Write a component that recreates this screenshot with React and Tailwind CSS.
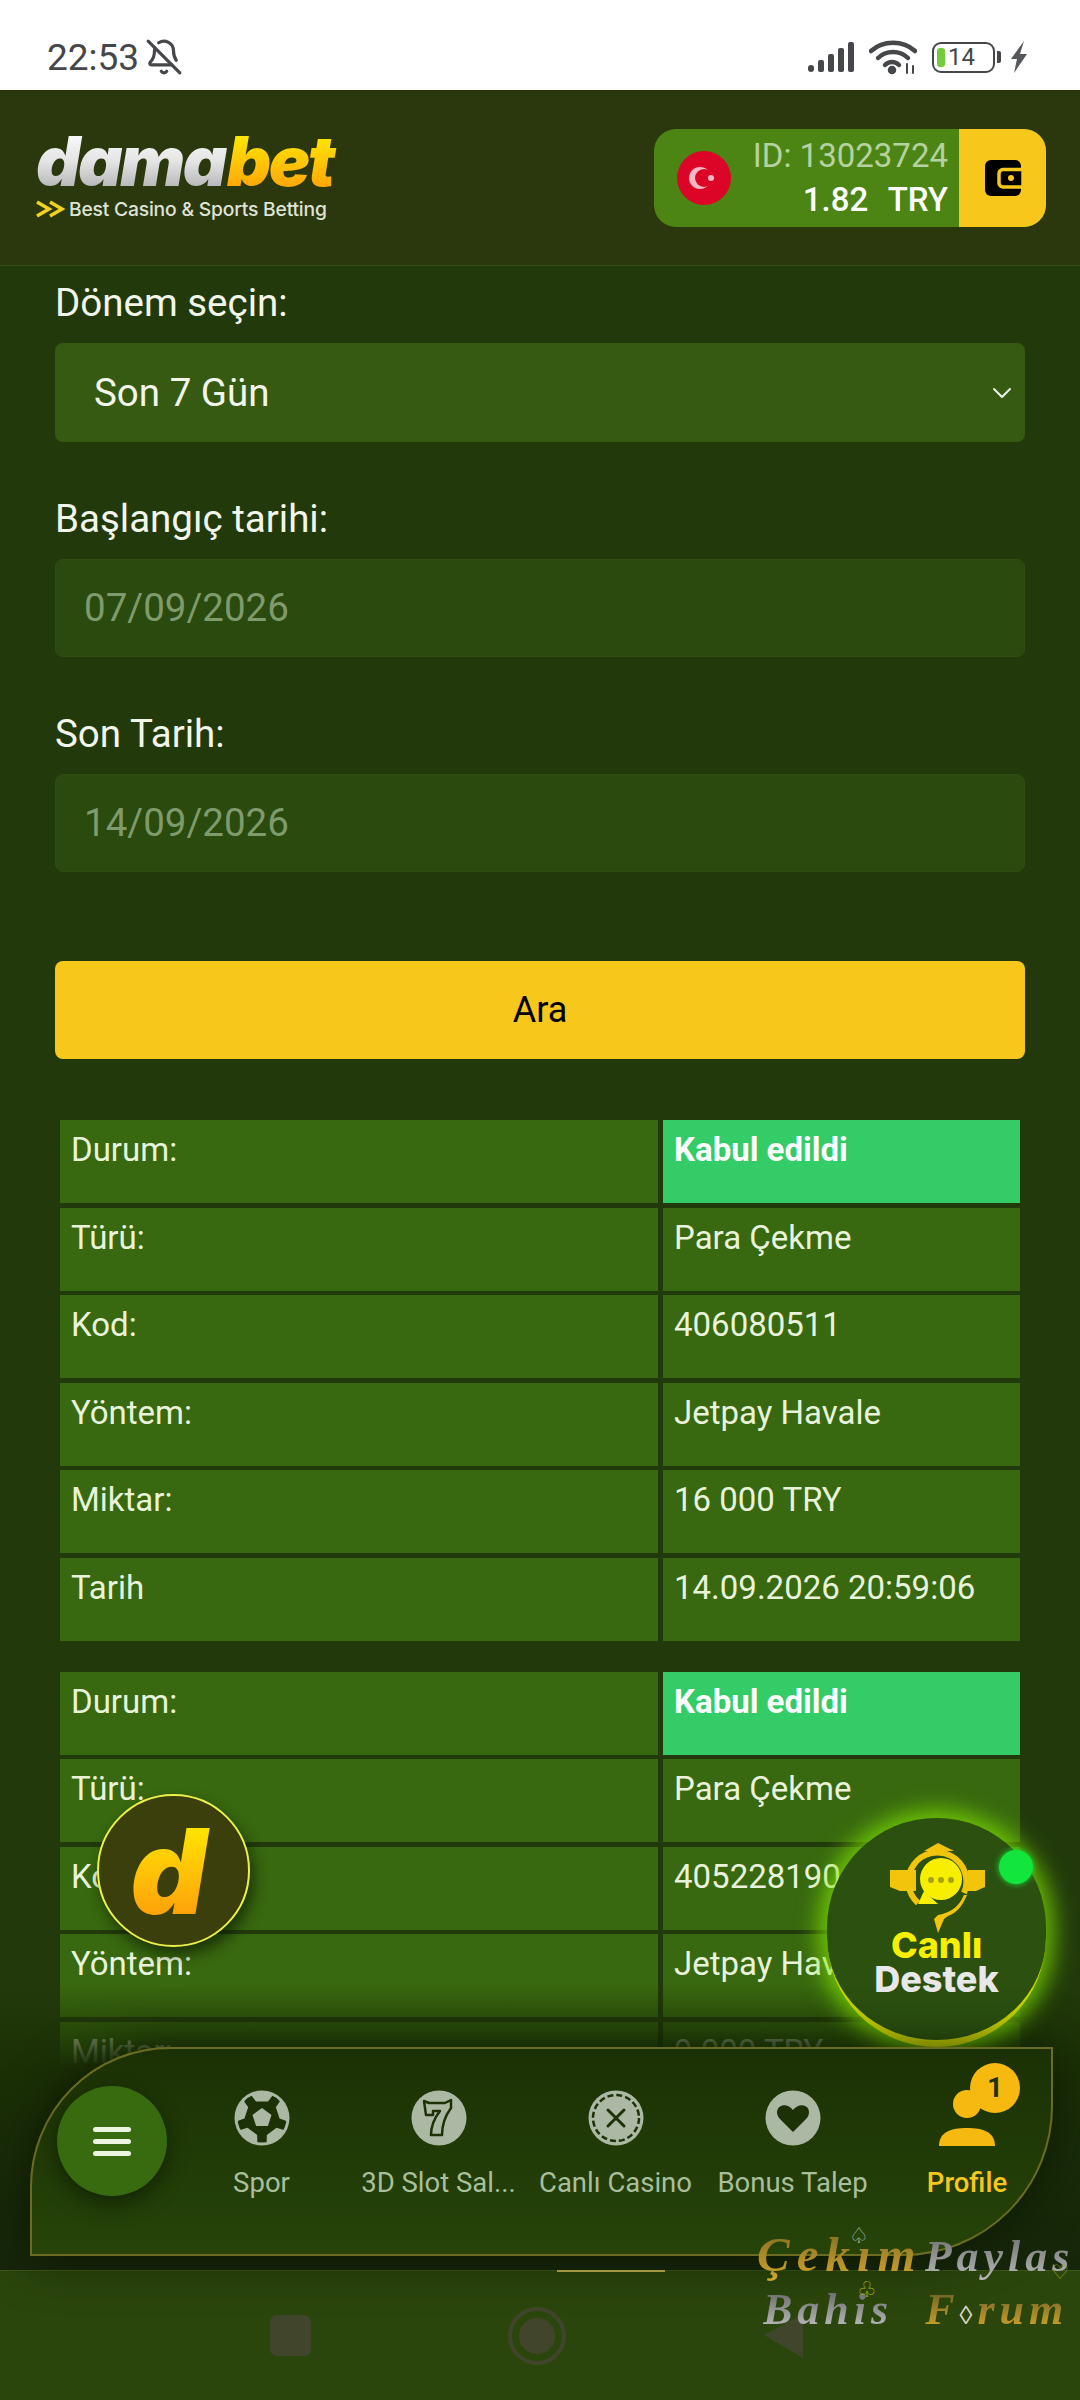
import { BellOff, ChevronDown } from 'lucide-react'

const rowsFirst = [
  ['Durum:', 'Kabul edildi'],
  ['Türü:', 'Para Çekme'],
  ['Kod:', '406080511'],
  ['Yöntem:', 'Jetpay Havale'],
  ['Miktar:', '16 000 TRY'],
  ['Tarih', '14.09.2026 20:59:06'],
]

const rowsSecond = [
  ['Durum:', 'Kabul edildi'],
  ['Türü:', 'Para Çekme'],
  ['Kod:', '405228190'],
  ['Yöntem:', 'Jetpay Havale'],
  ['Miktar:', '9 000 TRY'],
]

function StatusBar() {
  return (
    <div className="flex h-[90px] shrink-0 items-center justify-between bg-white pl-[47px] pr-[52px] pt-[24px] text-[#45474b]">
      <div className="flex items-center gap-[6px]">
        <span className="text-[37px] leading-none">22:53</span>
        <BellOff size={38} strokeWidth={2} />
      </div>
      <div className="flex items-center gap-[13px]">
        <svg width="48" height="32" viewBox="0 0 48 32" fill="#45474b">
          <rect x="0" y="24" width="6" height="7" rx="3" />
          <rect x="10" y="19" width="6" height="12" rx="2" />
          <rect x="20" y="13" width="6" height="18" rx="2" />
          <rect x="30" y="7" width="6" height="24" rx="2" />
          <rect x="40" y="1" width="6" height="30" rx="2" />
        </svg>
        <svg width="48" height="36" viewBox="0 0 48 36" fill="none" stroke="#45474b" strokeWidth="4.5" strokeLinecap="round">
          <path d="M2 12C14 1 34 1 46 12" />
          <path d="M9 19C17 11 31 11 39 19" />
          <path d="M16 26C20 22 26 22 30 26" />
          <circle cx="23" cy="31" r="2" fill="#45474b" />
          <path d="M38 25v9M44 27v7" strokeWidth="2" />
        </svg>
        <div className="ml-[2px] flex items-center gap-[2px]">
          <div className="flex h-[31px] w-[63px] items-center gap-[3px] rounded-[9px] border-[2.5px] border-[#45474b] pl-[3px]">
            <div className="h-[19px] w-[8px] rounded-[3px] bg-[#74cc3c]" />
            <span className="text-[24px] leading-none">14</span>
          </div>
          <div className="h-[12px] w-[4px] rounded-r-[2px] bg-[#45474b]" />
        </div>
        <svg className="-ml-[4px]" width="18" height="32" viewBox="0 0 18 32" fill="#55575a">
          <path d="M14 0L1 18h6l-3 14 13-19h-7z" />
        </svg>
      </div>
    </div>
  )
}

function Logo() {
  return (
    <div className="-mt-[3px] flex flex-col">
      <div className="flex h-[58px] items-center text-[69px] font-black italic leading-none tracking-[-2.5px] [font-family:Inter,sans-serif]">
        <span className="bg-gradient-to-b from-[#ffffff] via-[#e4e4e4] to-[#a9a9a9] bg-clip-text pr-[2px] text-transparent">dama</span>
        <span className="bg-gradient-to-b from-[#fff000] to-[#ff9c0a] bg-clip-text pr-[4px] text-transparent">bet</span>
      </div>
      <div className="mt-[9px] flex items-center gap-[3px]">
        <svg width="30" height="18" viewBox="0 0 30 18" fill="none" stroke="#f2d21c" strokeWidth="3.5">
          <path d="M1 2l12 7-12 7M14 2l12 7-12 7" />
        </svg>
        <span className="text-[19.3px] font-medium leading-none tracking-[-0.2px] text-[#dfe3d6] [font-family:Inter,sans-serif]">Best Casino &amp; Sports Betting</span>
      </div>
    </div>
  )
}

function Balance() {
  return (
    <div className="flex h-[98px] w-[392px] overflow-hidden rounded-[22px] bg-[#4d8514]">
      <div className="flex flex-1 items-center justify-between pl-[22px] pr-[11px]">
        <svg width="56" height="56" viewBox="0 0 56 56">
          <circle cx="28" cy="28" r="27" fill="#dc0528" />
          <circle cx="24" cy="28" r="11" fill="#f7b8c4" />
          <circle cx="28" cy="28" r="9" fill="#dc0528" />
          <circle cx="35" cy="28" r="3" fill="#f7b8c4" />
        </svg>
        <div className="flex flex-col items-end text-[33px] leading-[44px]">
          <span className="text-[#b5d2a0]">ID: 13023724</span>
          <span className="font-medium text-white [word-spacing:12px]">1.82 TRY</span>
        </div>
      </div>
      <div className="flex w-[87px] items-center justify-center bg-[#f7c71c]">
        <svg className="ml-[4px]" width="40" height="36" viewBox="0 0 40 36">
          <rect x="0" y="0" width="36" height="36" rx="6" fill="#000" />
          <path d="M38 9.500H18a4 4 0 0 0-4 4v9.500a4 4 0 0 0 4 4h20z" fill="#000" stroke="#f7c71c" strokeWidth="3.5" />
          <circle cx="26" cy="18" r="3" fill="#f7c71c" />
        </svg>
      </div>
    </div>
  )
}

function Header() {
  return (
    <div className="flex h-[176px] shrink-0 items-center justify-between border-b border-[#33500f] bg-[#2b380d] pl-[36px] pr-[34px]">
      <Logo />
      <Balance />
    </div>
  )
}

function Field({ label, children }) {
  return (
    <div className="mb-[56px]">
      <div className="mb-[19px] text-[38.5px] leading-[42px] text-[#f2f6ea]">{label}</div>
      {children}
    </div>
  )
}

function DateInput({ value }) {
  return (
    <div className="flex h-[98px] items-center rounded-[8px] border border-[#2e4f10] bg-[#2a4a0e] pl-[28px] text-[38.5px] text-[#7f9a6c]">
      {value}
    </div>
  )
}

function ResultTable({ rows }) {
  return (
    <div className="mx-[5px] grid grid-cols-[598px_357px] gap-x-[5px] gap-y-[4.5px] text-[33px] leading-[40px] text-[#e8f3da]">
      {rows.map(([label, value], index) => (
        <div key={label} className="contents">
          <div className="h-[83px] bg-[#38680f] pl-[11px] pt-[10px]">{label}</div>
          <div className={index === 0 ? 'h-[83px] bg-[#33cc66] pl-[11px] pt-[10px] font-bold text-white' : 'h-[83px] bg-[#38680f] pl-[11px] pt-[10px]'}>
            {value}
          </div>
        </div>
      ))}
    </div>
  )
}

function SoccerIcon() {
  return (
    <svg width="56" height="56" viewBox="0 0 56 56">
      <circle cx="28" cy="28" r="27.500" fill="#aab8a4" />
      <circle cx="28" cy="28" r="24.500" fill="#1c3206" />
      <path d="M28 18l9.500 6.900-3.600 11.100H22.100l-3.600-11.100z" fill="#aab8a4" />
      {[36, 108, 180, 252, 324].map((angle) => (
        <path key={angle} d="M17 51L22 44.500H34L39 51A25 25 0 0 1 17 51Z" fill="#aab8a4" transform={`rotate(${angle} 28 28)`} />
      ))}
    </svg>
  )
}

function SevenIcon() {
  return (
    <svg width="56" height="56" viewBox="0 0 56 56">
      <circle cx="28" cy="28" r="27.500" fill="#aab8a4" />
      <path d="M13 11L18 13H34L40 10V18C34 26 31 34 31 45H20C20 34 25 26 29 21H22V25H15Z" fill="#aab8a4" stroke="#1c3206" strokeWidth="2.500" strokeLinejoin="round" />
    </svg>
  )
}

function RouletteIcon() {
  return (
    <svg width="56" height="56" viewBox="0 0 56 56">
      <circle cx="28" cy="28" r="27.500" fill="#aab8a4" />
      <circle cx="28" cy="28" r="23" fill="none" stroke="#1c3206" strokeWidth="2.500" strokeDasharray="6 3" />
      <path d="M20 20l16 16M36 20L20 36" stroke="#1c3206" strokeWidth="3" strokeLinecap="round" />
    </svg>
  )
}

function HeartIcon() {
  return (
    <svg width="56" height="56" viewBox="0 0 56 56">
      <circle cx="28" cy="28" r="27.500" fill="#aab8a4" />
      <path d="M28 42L15 29c-4-4-4-10 0-12.500 4-2.500 9.500-1 13 3.500 3.500-4.500 9-6 13-3.500 4 2.500 4 8.500 0 12.500z" fill="#1c3206" />
    </svg>
  )
}

function BottomNav() {
  const items = [
    ['Spor', <SoccerIcon key="a" />],
    ['3D Slot Sal...', <SevenIcon key="b" />],
    ['Canlı Casino', <RouletteIcon key="c" />],
    ['Bonus Talep', <HeartIcon key="d" />],
  ]
  return (
    <div className="absolute left-[30px] top-[2047px] flex h-[209px] w-[1023px] rounded-tl-[140px] rounded-br-[150px] border-2 border-[#6b6c22] bg-gradient-to-b from-[#1b3105] to-[#264409] pl-[25px] shadow-[0_0_50px_rgba(10,20,0,0.8)]">
      <div className="mt-[37px] flex h-[110px] w-[110px] shrink-0 flex-col items-center justify-center gap-[7px] rounded-full bg-[#386a10] shadow-[0_8px_20px_rgba(10,20,0,0.6)]">
        <div className="h-[5px] w-[38px] rounded-full bg-[#edf4e2]" />
        <div className="h-[5px] w-[38px] rounded-full bg-[#edf4e2]" />
        <div className="h-[5px] w-[38px] rounded-full bg-[#edf4e2]" />
      </div>
      <div className="ml-[6px] flex">
        {items.map(([label, icon]) => (
          <div key={label} className="flex w-[177px] flex-col items-center pt-[41px] text-[27.5px] leading-[32px] text-[#a9bf9c]">
            {icon}
            <span className="mt-[21px] whitespace-nowrap">{label}</span>
          </div>
        ))}
        <div className="relative flex w-[172px] flex-col items-center pt-[41px] text-[27.5px] font-medium leading-[32px] text-[#f7c71c]">
          <svg width="56" height="56" viewBox="0 0 56 56" fill="#f5b90f">
            <circle cx="28" cy="14" r="14" />
            <path d="M0 56c0-14 12-18 28-18s28 4 28 18z" />
          </svg>
          <span className="mt-[21px]">Profile</span>
          <div className="absolute left-[89px] top-[14px] flex h-[50px] w-[50px] items-center justify-center rounded-full bg-[#f5b90f] text-[27px] font-bold text-[#1c3206]">1</div>
        </div>
      </div>
    </div>
  )
}

function FloatingLogo() {
  return (
    <div className="absolute left-[97px] top-[1794px] flex h-[153px] w-[153px] items-center justify-center rounded-full border-2 border-[#eef04a] bg-[#3a3f0c] shadow-[4px_8px_14px_rgba(10,20,0,0.6)]">
      <span className="bg-gradient-to-b from-[#ffe900] to-[#ff9c0a] bg-clip-text pr-[10px] text-[118px] font-black italic leading-[100px] text-transparent [font-family:Inter,sans-serif]">d</span>
    </div>
  )
}

function LiveSupport() {
  return (
    <div className="absolute left-[827px] top-[1818px] flex h-[229px] w-[219px] flex-col items-center rounded-full border-b-[7px] border-[#c8d400] bg-[#2b5010] pt-[25px] shadow-[0_0_22px_8px_rgba(130,230,0,0.75)]">
      <svg width="98" height="90" viewBox="0 0 98 90">
        <path d="M30 60A29 29 0 1 1 76 50" fill="none" stroke="#f2c40c" strokeWidth="6" />
        <path d="M36 8L50 0L66 8Z" fill="#f2c40c" />
        <path d="M2 27H28V48H12L2 44Z" fill="#f2c40c" />
        <path d="M80 27H97V44L88 48H78Z" fill="#f2c40c" />
        <path d="M76 52C70 66 60 70 50 72L46 76L50 90L56 76L60 73C68 70 74 64 79 52Z" fill="#f2c40c" />
        <circle cx="53" cy="36" r="21" fill="#f7ee00" />
        <path d="M36 48L30 61H50Z" fill="#f7ee00" />
        <circle cx="43" cy="37" r="3" fill="#a7a40a" />
        <circle cx="53" cy="37" r="3" fill="#a7a40a" />
        <circle cx="63" cy="37" r="3" fill="#a7a40a" />
      </svg>
      <span className="-mt-[5px] text-[36px] font-extrabold leading-[34px] text-[#f7ee00] [font-family:Inter,sans-serif]">Canlı</span>
      <span className="text-[36px] font-extrabold leading-[34px] text-[#e8e8e8] [font-family:Inter,sans-serif]">Destek</span>
      <div className="absolute left-[172px] top-[32px] h-[34px] w-[34px] rounded-full bg-[#12e53c] shadow-[0_0_6px_#12e53c]" />
    </div>
  )
}

function Watermark() {
  return (
    <div className="absolute left-[757px] top-[2228px] text-[44px] font-bold italic leading-[53px] tracking-[5px] [font-family:'Liberation_Serif',serif]">
      <div className="whitespace-nowrap">
        <span className="bg-gradient-to-b from-[#7d6a22] to-[#d6a72a] bg-clip-text text-[49px] tracking-[7px] text-transparent">Çekım</span>
        <span className="ml-[2px] bg-gradient-to-b from-[#6d7070] to-[#b8b8b8] bg-clip-text text-transparent">Paylas</span>
      </div>
      <div className="ml-[6px] whitespace-nowrap">
        <span className="bg-gradient-to-b from-[#5e6060] to-[#c8c8c8] bg-clip-text text-transparent">Bahis</span>
        <span className="ml-[32px] bg-gradient-to-b from-[#5e5a22] to-[#e0ab26] bg-clip-text text-transparent">F<span className="text-[26px] font-normal not-italic text-[#c8d4c4]">◊</span>rum</span>
      </div>
      <span className="absolute left-[92px] top-[-3px] text-[22px] font-normal not-italic leading-none tracking-normal text-[#a5b8a0]">♤</span>
      <span className="absolute left-[100px] top-[51px] text-[22px] font-normal not-italic leading-none tracking-normal text-[#a8b010]">♧</span>
      <span className="absolute left-[294px] top-[34px] text-[20px] font-normal not-italic leading-none tracking-normal text-[#8fa010]">♡</span>
    </div>
  )
}

function SystemNav() {
  return (
    <div className="relative flex h-[130px] shrink-0 items-center border-t border-[#3b5a14] bg-[#2b460c]">
      <div className="absolute left-[557px] top-[-1px] h-[2px] w-[108px] bg-[#cdbb52]" />
      <div className="ml-[270px] h-[41px] w-[41px] rounded-[7px] bg-[#41452c]" />
      <div className="ml-[197px] flex h-[58px] w-[58px] items-center justify-center rounded-full border-[4px] border-[#41452c]">
        <div className="h-[36px] w-[36px] rounded-full bg-[#41452c]" />
      </div>
      <svg className="ml-[198px]" width="40" height="44" viewBox="0 0 40 44" fill="#40452b">
        <path d="M39 0v44L0 21z" />
      </svg>
    </div>
  )
}

export default function App() {
  return (
    <div className="relative flex h-[2400px] w-[1080px] flex-col overflow-hidden bg-[#223a0b] [font-family:Roboto,sans-serif]">
      <StatusBar />
      <Header />

      <main className="min-h-0 flex-1 overflow-hidden px-[55px] pt-[16px]">
        <Field label="Dönem seçin:">
          <div className="flex h-[99px] items-center justify-between rounded-[8px] bg-[#365a12] pl-[39px] pr-[7px] text-[38.5px] text-[#f2f6ea]">
            <span>Son 7 Gün</span>
            <ChevronDown size={32} strokeWidth={1.5} />
          </div>
        </Field>
        <Field label="Başlangıç tarihi:">
          <DateInput value="07/09/2026" />
        </Field>
        <Field label="Son Tarih:">
          <DateInput value="14/09/2026" />
        </Field>
        <button className="mt-[89px] block h-[98px] w-full rounded-[8px] bg-[#f7c71c] text-center text-[36px] text-black">Ara</button>
        <div className="mt-[61px] flex flex-col gap-[31px]">
          <ResultTable rows={rowsFirst} />
          <ResultTable rows={rowsSecond} />
        </div>
      </main>

      <SystemNav />

      <div className="absolute inset-x-0 top-[1985px] h-[285px] bg-gradient-to-b from-transparent via-[#1b3005] via-[30%] to-[#16260a]" />
      <LiveSupport />
      <FloatingLogo />
      <BottomNav />
      <Watermark />
    </div>
  )
}
